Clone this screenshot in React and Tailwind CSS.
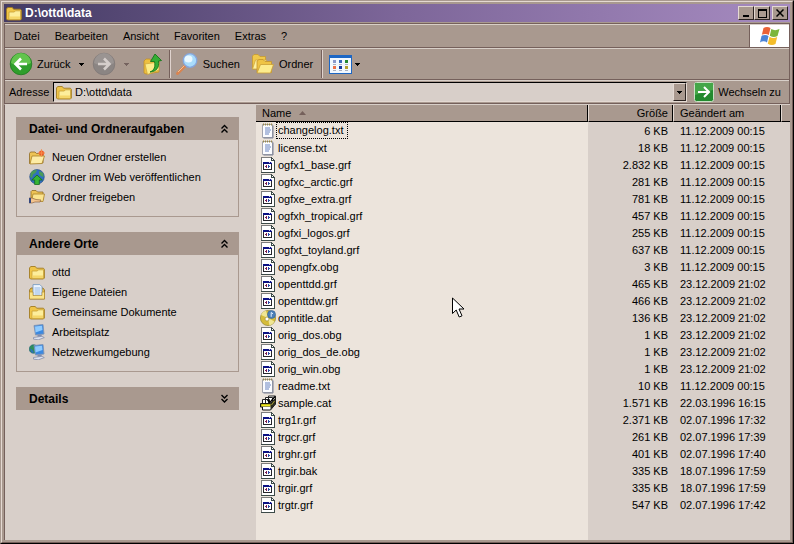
import React from "react";

const Folder = () => (
  <svg width="16" height="16" viewBox="0 0 16 16" className="shrink-0" aria-hidden="true">
    <path d="M.5 4 1.700 2.500h4.600L7.600 4.200h6.800l1 1.200v8.600l-1 1H1.500L.5 14z" fill="#f0c548" stroke="#a17c22" strokeWidth=".9" />
    <path d="M3 7h5.300l1.200-1.200h5v8.400H3z" fill="#fdee9c" stroke="#c79f38" strokeWidth=".8" />
    <path d="M3.500 11.500h10.600v2.300H3.500z" fill="#f5d769" />
  </svg>
);

const NewFolder = () => (
  <svg width="16" height="16" viewBox="0 0 16 16" className="shrink-0" aria-hidden="true">
    <path d="M.5 14.500V4.500l1-1.500h4.500l1.500 1.500H14V14z" fill="#edc355" stroke="#8f6b25" strokeWidth=".8" />
    <path d="M3 7h12.500L13 14.500l-12 .5z" fill="#fdeca6" stroke="#a98128" strokeWidth=".8" />
    <circle cx="12.500" cy="4" r="2.600" fill="#ef5a26" />
    <path d="M12.500.3v7.400M8.800 4h7.400" stroke="#f58a4a" />
  </svg>
);

const Globe = () => (
  <svg width="16" height="16" viewBox="0 0 16 16" className="shrink-0" aria-hidden="true">
    <circle cx="8" cy="7.800" r="7.300" fill="#2f6fc0" stroke="#1d4580" strokeWidth=".6" />
    <path d="M2 3.500C4 1 7 .6 8 1.300L6.500 4 4 5.500 3 9 1.200 8zM10 2l4 2 .7 4-2.700-1-2-2z" fill="#4a9c57" />
    <path d="m8 6 5.300 5h-3v4.600H5.700V11h-3z" fill="#35b535" stroke="#14681a" strokeWidth=".8" />
  </svg>
);

const Share = () => (
  <svg width="16" height="16" viewBox="0 0 16 16" className="shrink-0" aria-hidden="true">
    <path d="M2 11V2.500l1-1h4L8.500 3H14v8z" fill="#edc355" stroke="#8f6b25" strokeWidth=".8" />
    <path d="M4 5h11.500L14 12.500H2.500z" fill="#fbe48e" stroke="#a98128" strokeWidth=".8" />
    <path d="M0 9h3l4 1.500 5 .5-1 2H6l-3 1H0z" fill="#f3c48e" stroke="#7d5230" strokeWidth=".6" />
    <path d="M0 9h2v5H0z" fill="#34477e" />
  </svg>
);

const DocsFolder = () => (
  <svg width="16" height="16" viewBox="0 0 16 16" className="shrink-0" aria-hidden="true">
    <path d="M.5 6 2 4h12l1.500 2v9H.5z" fill="#e5b941" stroke="#94701f" strokeWidth=".8" />
    <path d="M4 .6h6.800L13 2.800V12H4z" fill="#eef6ff" stroke="#6d93bd" strokeWidth=".8" />
    <path d="M5.500 4h6M5.500 6h6M5.500 8h6M5.500 10h6" stroke="#7aa7dc" strokeWidth=".8" />
    <path d="M.5 8H4v3.500h9V8h2.500v7H.5z" fill="#fbe48a" stroke="#ab8328" strokeWidth=".6" />
  </svg>
);

const Computer = ({ net }) => (
  <svg width="16" height="16" viewBox="0 0 16 16" className="shrink-0" aria-hidden="true">
    {net && <circle cx="4.500" cy="5" r="4.300" fill="#2d8f5b" stroke="#205f80" strokeWidth=".6" />}
    {net && <path d="M1 5c2-1 2 2 4 3L3 9z" fill="#2d6fc0" />}
    <path d="M5 1.500 14 .5l1 9.500-8.500 1z" fill="#3c89e0" stroke="#7f94b4" strokeWidth=".9" />
    <path d="m6 2.500 7-.8.500 4.300-7 2.500z" fill="#8fcbff" />
    <path d="M8.500 10.800H12.500l.5 2H8.500z" fill="#7f8cb0" />
    <path d="m4.500 13.500 8.500-1.200 2.300 1.300-6 2.200-4.800-.7z" fill="#dde2f0" stroke="#7d86a3" strokeWidth=".7" />
  </svg>
);

const TextFile = () => (
  <svg width="16" height="16" viewBox="0 0 16 16" className="shrink-0" aria-hidden="true">
    <path d="M2.500 1.500h10v13h-10z" fill="#fbfcff" stroke="#9a9ca8" strokeWidth=".9" />
    <path d="M13 2.500V15H3.500" fill="none" stroke="#7a8094" />
    <path d="M3.500.5v2M5.500.5v2M7.500.5v2M9.500.5v2M11.500.5v2" stroke="#9a8845" strokeWidth="1" />
    <path d="M5 5h5M5 7h6M5 9h5M5 11h4" stroke="#5777b8" strokeWidth=".9" />
  </svg>
);

const AppFile = () => (
  <svg width="16" height="16" viewBox="0 0 16 16" className="shrink-0" shapeRendering="crispEdges" aria-hidden="true">
    <path d="M1 0h10l4 4v12H1z" fill="#fff" />
    <path d="M1 0h10v1H2v14H1z" fill="#7d7d7d" />
    <path d="M1 15h13v1H1zM14 4h1v12h-1z" fill="#3c4a48" />
    <path d="M11 0h1v1h1v1h1v1h1v1h-4z" fill="#3c4a48" />
    <path d="M12 2h1v1h-1z" fill="#fff" />
    <path d="M3 5h9v8H3z" fill="#26262c" />
    <path d="M3 5h9v2H3z" fill="#0a1084" />
    <path d="M4 7h7v5H4z" fill="#fff" />
    <path d="M9 5h1v1H9zM11 5h1v1h-1z" fill="#c8c8e8" />
    <path d="M5 9h2v1H5zM6 8h1v3H6z" fill="#7c1c50" />
    <path d="M8 9h2v1H8zM8 8h1v3H8z" fill="#2b49a8" />
  </svg>
);

const Disc = () => (
  <svg width="16" height="16" viewBox="0 0 16 16" className="shrink-0" aria-hidden="true">
    <circle cx="8" cy="8" r="7.600" fill="#d6bc3a" stroke="#8f8434" strokeWidth=".7" />
    <path d="M8 8 1 5a7.500 7.500 0 0 1 5-4.500zM8 8l6.500 3.500a7.500 7.500 0 0 1-5 4z" fill="#f0e694" />
    <circle cx="7" cy="9" r="2" fill="#fff" stroke="#a39338" strokeWidth=".7" />
    <circle cx="11.500" cy="4.500" r="4" fill="#4b7fb8" stroke="#2f5f93" strokeWidth=".6" />
    <path d="M11.200 6.800V2.500l1.800 1.300" stroke="#e3f1ff" fill="none" />
  </svg>
);

const Catalog = () => (
  <svg width="16" height="16" viewBox="0 0 16 16" className="shrink-0" aria-hidden="true">
    <path d="M8.500 1h7v8h-7zM5.500 2.500h7v8h-7zM2.500 4.500h7v7h-7z" fill="#fff" stroke="#222" />
    <path d="M.5 8.500h10l5-5V9l-5 6h-8v-3h-2z" fill="#fff" stroke="#111" />
    <path d="M10.500 8.500l5-5.500v6l-5 6z" fill="#2b2b22" />
    <path d="M1 9h9.500v2.500H1z" fill="#f2ea1e" stroke="#3d3a08" strokeWidth=".5" />
    <path d="m7.500 5 2.500 2.500 5-6" fill="none" stroke="#000" strokeWidth="1.500" />
    <path d="m11.500 10 3-4" stroke="#a8a030" />
  </svg>
);

const RoundArrow = ({ grey }) => (
  <svg width="24" height="24" viewBox="0 0 24 24" className="shrink-0" aria-hidden="true">
    <circle cx="12" cy="12" r="10.800" fill={grey ? "#8b8583" : "#2f9e2c"} stroke={grey ? "#807977" : "#217a20"} strokeWidth=".8" />
    <path d="M2 11a10 10 0 0 1 20 0c-5 3-15 3-20 0z" fill={grey ? "#9a9492" : "#62c44d"} />
    <path
      d={grey ? "M6 12h11M12 6.500l5.500 5.500-5.500 5.500" : "M18 12H7M12 6.500 6.500 12l5.500 5.500"}
      fill="none"
      stroke={grey ? "#d5cecb" : "#fff"}
      strokeWidth="2.600"
    />
  </svg>
);

const UpFolder = () => (
  <svg width="22" height="24" viewBox="0 0 22 24" className="shrink-0" aria-hidden="true">
    <path d="M3 9l2-2h4l1 2h8v11l-13 2-2-1z" fill="#edc03f" stroke="#c09028" strokeWidth=".8" />
    <path d="m4 12 14-2v8L6.500 22.500z" fill="#fcec88" stroke="#cda33a" strokeWidth=".7" />
    <path d="M9 20c4.500-2 5.500-5 4.500-10.500L9.500 9.500 14 2l6.500 6.500-3 .5c1 6.500-2 10.500-8.500 11z" fill="#34ae35" stroke="#157619" strokeWidth=".9" />
  </svg>
);

const Magnifier = () => (
  <svg width="24" height="24" viewBox="0 0 24 24" className="shrink-0" aria-hidden="true">
    <path d="M10 14 2.500 21.500" stroke="#d98450" strokeWidth="3" strokeLinecap="round" />
    <path d="M9.500 13.500 3 20" stroke="#f7c08f" strokeWidth="1" />
    <circle cx="15" cy="8.500" r="6.800" fill="#a9dcfb" stroke="#86a6dc" strokeWidth="1.300" />
    <ellipse cx="13.500" cy="7" rx="4" ry="3.500" fill="#e9f8ff" />
  </svg>
);

const Folders = () => (
  <svg width="24" height="24" viewBox="0 0 24 24" className="shrink-0" aria-hidden="true">
    <path d="M1.500 17V4l1.500-1.500h4l2 2h5.500v12z" fill="#f0c94b" stroke="#c79a30" strokeWidth=".8" />
    <path d="m1.500 17 3-9h11l-3 9z" fill="#fdf0a0" stroke="#cfa63d" strokeWidth=".8" />
    <path d="M6 20.500V9l2-1.500h4l2 2h6.500v11z" fill="#efc444" stroke="#c4942c" strokeWidth=".8" />
    <path d="m6 21 3.500-8.500h13L19.500 21z" fill="#fdec8d" stroke="#cb9f36" strokeWidth=".8" />
  </svg>
);

const Views = () => (
  <svg width="24" height="20" viewBox="0 0 24 20" className="shrink-0" shapeRendering="crispEdges" aria-hidden="true">
    <path d="M0 1h23v19H0z" fill="#1c66c4" />
    <path d="M1 4h21v15H1z" fill="#f1f8ff" />
    <path d="M4 6h3v3H4z" fill="#8999cc" />
    <path d="M10 6h3v3h-3z" fill="#3768bb" />
    <path d="M16 6h3v3h-3z" fill="#228931" />
    <path d="M4 12h3v3H4z" fill="#ec7148" />
    <path d="M10 12h3v3h-3z" fill="#173b9e" />
    <path d="M16 12h3v3h-3z" fill="#b5a02d" />
    <path d="M4 10h3v1H4zM10 10h3v1h-3zM16 10h3v1h-3zM4 16h3v1H4zM10 16h3v1h-3zM16 16h3v1h-3z" fill="#a9b0bf" />
  </svg>
);

const Flag = () => (
  <svg width="22" height="20" viewBox="0 0 22 20" aria-hidden="true">
    <path d="M4.500 2c2-1.500 5-1.500 7 0L9.800 9c-2-1.500-5-1.500-7 0z" fill="#ea6236" />
    <path d="M12.300 3c2.500 1.500 5 1.500 8.200 0l-2 7c-2.500 1.500-5 1.500-7.700-.2z" fill="#7bb63c" />
    <path d="M2.500 10c2-1.500 5-1.500 7 0L8 16.500c-2-1.700-5-1.500-7 0z" fill="#4a83d6" />
    <path d="M10.500 10.800c2.500 1.700 5 1.500 7.700.2L16.500 18c-2.500 1.500-5 1.500-7.700-.2z" fill="#f4bd2b" />
  </svg>
);

const Caret = ({ faint }) => (
  <svg width="5" height="3" viewBox="0 0 5 3" className="shrink-0" shapeRendering="crispEdges" aria-hidden="true">
    <path d="M0 0h5v1H4v1H3v1H2V2H1V1H0z" fill={faint ? "#75635f" : "#000"} />
  </svg>
);

const Chevrons = ({ down }) => (
  <svg width="9" height="10" viewBox="0 0 9 10" aria-hidden="true">
    <path
      d={down ? "M1.500 1l3 3 3-3M1.500 5l3 3 3-3" : "M1.500 4.500l3-3 3 3M1.500 8.500l3-3 3 3"}
      fill="none"
      stroke="#000"
      strokeWidth="1.400"
    />
  </svg>
);

const Divider = () => <span className="h-7 w-[2px] shrink-0 border-l border-r border-l-[#75605b] border-r-[#e0d3ce]" />;

const bar = "flex items-center border-t border-b border-t-[#d8cfc8] border-b-[#75605b]";
const raised = "border border-t-[#e4d9d2] border-l-[#e4d9d2] border-r-[#2a2220] border-b-[#2a2220] bg-[#a9998f]";

function Panel({ title, items }) {
  return (
    <section>
      <h2 className="flex h-[23px] items-center justify-between bg-[#a9998f] pr-[10px] pl-[13px] text-[12px] font-bold">
        {title}
        <button type="button" aria-label={title + " umschalten"}>
          <Chevrons down={!items} />
        </button>
      </h2>
      {items && (
        <ul className="border border-t-0 border-[#a9998f] pt-[7px] pb-[9px] pl-3">
          {items.map(([icon, label]) => (
            <li key={label} className="h-5">
              <a href="#" className="flex h-5 items-center gap-[7px]">
                {icon}
                {label}
              </a>
            </li>
          ))}
        </ul>
      )}
    </section>
  );
}

const files = [
  ["changelog.txt", "6 KB", "11.12.2009 00:15"],
  ["license.txt", "18 KB", "11.12.2009 00:15"],
  ["ogfx1_base.grf", "2.832 KB", "11.12.2009 00:15"],
  ["ogfxc_arctic.grf", "281 KB", "11.12.2009 00:15"],
  ["ogfxe_extra.grf", "781 KB", "11.12.2009 00:15"],
  ["ogfxh_tropical.grf", "457 KB", "11.12.2009 00:15"],
  ["ogfxi_logos.grf", "255 KB", "11.12.2009 00:15"],
  ["ogfxt_toyland.grf", "637 KB", "11.12.2009 00:15"],
  ["opengfx.obg", "3 KB", "11.12.2009 00:15"],
  ["openttdd.grf", "465 KB", "23.12.2009 21:02"],
  ["openttdw.grf", "466 KB", "23.12.2009 21:02"],
  ["opntitle.dat", "136 KB", "23.12.2009 21:02"],
  ["orig_dos.obg", "1 KB", "23.12.2009 21:02"],
  ["orig_dos_de.obg", "1 KB", "23.12.2009 21:02"],
  ["orig_win.obg", "1 KB", "23.12.2009 21:02"],
  ["readme.txt", "10 KB", "11.12.2009 00:15"],
  ["sample.cat", "1.571 KB", "22.03.1996 16:15"],
  ["trg1r.grf", "2.371 KB", "02.07.1996 17:32"],
  ["trgcr.grf", "261 KB", "02.07.1996 17:39"],
  ["trghr.grf", "401 KB", "02.07.1996 17:40"],
  ["trgir.bak", "335 KB", "18.07.1996 17:59"],
  ["trgir.grf", "335 KB", "18.07.1996 17:59"],
  ["trgtr.grf", "547 KB", "02.07.1996 17:42"],
];

function FileIcon({ name }) {
  if (name.endsWith(".txt")) return <TextFile />;
  if (name.endsWith(".dat")) return <Disc />;
  if (name.endsWith(".cat")) return <Catalog />;
  return <AppFile />;
}

const th = "border-b border-b-black p-0 font-normal";

export default function App() {
  return (
    <div className="flex min-h-screen flex-col border border-t-[#a9998f] border-r-black border-b-black border-l-[#a9998f] bg-[#a9998f] font-['Liberation_Sans',Arial,sans-serif] text-[11px] leading-4 text-black">
      <div className="flex grow flex-col border border-t-[#e4d9d2] border-r-[#75605b] border-b-[#75605b] border-l-[#e4d9d2] p-[2px]">
        <header className="flex h-[18px] items-center bg-linear-to-r from-[#443b64] via-[#7d6699] to-[#a68bc0] pr-[2px] pl-[2px]">
          <Folder />
          <h1 className="ml-[3px] grow text-[12px] font-bold text-white">D:\ottd\data</h1>
          <button type="button" aria-label="Minimieren" className={"flex h-[14px] w-4 items-end justify-center pb-[2px] " + raised}>
            <span className="h-[2px] w-[6px] bg-black" />
          </button>
          <button type="button" aria-label="Maximieren" className={"flex h-[14px] w-4 items-center justify-center " + raised}>
            <span className="h-[9px] w-[9px] border border-t-2 border-black" />
          </button>
          <button type="button" aria-label="Schließen" className={"ml-[2px] flex h-[14px] w-4 items-center justify-center " + raised}>
            <svg width="8" height="8" viewBox="0 0 8 8" aria-hidden="true">
              <path d="m.5.5 7 7m0-7-7 7" stroke="#000" strokeWidth="1.500" />
            </svg>
          </button>
        </header>

        <div className="mt-px border-t border-r border-l border-t-[#75605b] border-r-[#75605b] border-l-[#75605b]">
          <nav className={"h-6 justify-between " + bar}>
            <div className="flex gap-[15px] pl-[9px]">
              {["Datei", "Bearbeiten", "Ansicht", "Favoriten", "Extras", "?"].map((m) => (
                <button type="button" key={m}>
                  {m}
                </button>
              ))}
            </div>
            <div className="flex h-full w-10 items-center justify-center border-l border-[#75605b] bg-white">
              <Flag />
            </div>
          </nav>

          <div className={"h-8 pl-1 " + bar}>
            <button type="button" className="flex items-center gap-1">
              <RoundArrow />
              Zurück
            </button>
            <button type="button" aria-label="Verlauf zurück" className="px-2">
              <Caret />
            </button>
            <button type="button" aria-label="Vorwärts">
              <RoundArrow grey />
            </button>
            <button type="button" aria-label="Verlauf vorwärts" className="px-2">
              <Caret faint />
            </button>
            <button type="button" aria-label="Aufwärts" className="mr-[6px] ml-1">
              <UpFolder />
            </button>
            <Divider />
            <button type="button" className="ml-1 flex items-center gap-1">
              <Magnifier />
              Suchen
            </button>
            <button type="button" className="ml-[11px] flex items-center gap-1">
              <Folders />
              Ordner
            </button>
            <span className="w-2" />
            <Divider />
            <button type="button" aria-label="Ansichten" className="ml-[6px] flex items-center gap-[2px]">
              <Views />
              <Caret />
            </button>
          </div>

          <div className={"h-6 pl-1 " + bar}>
            <label htmlFor="address" className="w-11 shrink-0">
              Adresse
            </label>
            <div className="flex h-5 grow items-center border border-t-black border-r-[#e4d9d2] border-b-[#e4d9d2] border-l-black bg-[#d8cfc9] pl-[2px]">
              <Folder />
              <input id="address" defaultValue="D:\ottd\data" className="ml-[3px] min-w-0 grow bg-transparent outline-none" />
              <button type="button" aria-label="Adressliste" className={"flex h-full w-[13px] items-center justify-center " + raised}>
                <Caret />
              </button>
            </div>
            <button type="button" className="ml-[7px] flex shrink-0 items-center gap-1 pr-2">
              <svg width="20" height="20" viewBox="0 0 20 20" aria-hidden="true">
                <rect x=".5" y=".5" width="19" height="19" rx="2" fill="#228a2e" stroke="#c9e3c4" />
                <path d="M1 1h18v7L1 13z" fill="#44a648" />
                <path d="M4 10h11M10 5l5 5-5 5" fill="none" stroke="#fff" strokeWidth="2" />
              </svg>
              Wechseln zu
            </button>
          </div>
        </div>

        <div className="flex grow border-t border-l border-t-[#d8cfc8] border-l-[#75605b] bg-[#d8cfc9]">
          <aside className="flex w-[251px] shrink-0 flex-col gap-[15px] pt-3 pr-[17px] pl-[11px]">
            <Panel
              title="Datei- und Ordneraufgaben"
              items={[
                [<NewFolder />, "Neuen Ordner erstellen"],
                [<Globe />, "Ordner im Web veröffentlichen"],
                [<Share />, "Ordner freigeben"],
              ]}
            />
            <Panel
              title="Andere Orte"
              items={[
                [<Folder />, "ottd"],
                [<DocsFolder />, "Eigene Dateien"],
                [<Folder />, "Gemeinsame Dokumente"],
                [<Computer />, "Arbeitsplatz"],
                [<Computer net />, "Netzwerkumgebung"],
              ]}
            />
            <Panel title="Details" />
          </aside>

          <main className="relative flex min-w-0 grow flex-col">
            <table className="w-full table-fixed border-separate border-spacing-0">
              <colgroup>
                <col />
                <col className="w-[85px]" />
                <col className="w-[108px]" />
                <col className="w-[9px]" />
              </colgroup>
              <thead className="bg-[#a9998f]">
                <tr className="h-[17px]">
                  <th className={"border-r border-r-black " + th}>
                    <span className="flex items-center gap-2 pl-[6px]">
                      Name
                      <svg width="7" height="4" viewBox="0 0 7 4" aria-hidden="true">
                        <path d="M0 4 3.500 0 7 4z" fill="#75605b" />
                      </svg>
                    </span>
                  </th>
                  <th className={"border-r border-l border-r-black border-l-[#e4d9d2] " + th}>
                    <span className="block pr-1 text-right">Größe</span>
                  </th>
                  <th className={"border-r border-l border-r-black border-l-[#e4d9d2] " + th}>
                    <span className="block pl-[6px] text-left">Geändert am</span>
                  </th>
                  <th className={"border-l border-l-[#e4d9d2] " + th} aria-label="Weitere Spalten" />
                </tr>
              </thead>
              <tbody>
                {files.map(([name, size, date], i) => (
                  <tr key={name} className="h-[17px]">
                    <td className="bg-[#ece4dc] p-0">
                      <span className="flex h-[17px] items-center pl-1">
                        <FileIcon name={name} />
                        <span className={i === 0 ? "border border-dotted border-black pr-1 pl-px leading-[15px]" : "pl-[2px]"}>{name}</span>
                      </span>
                    </td>
                    <td className="p-0">
                      <span className="block pr-[5px] text-right">{size}</span>
                    </td>
                    <td className="p-0">
                      <span className="block pl-[7px]">{date}</span>
                    </td>
                    <td className="p-0" />
                  </tr>
                ))}
              </tbody>
            </table>
            <div className="mr-[202px] grow bg-[#ece4dc]" />
            <svg width="13" height="21" viewBox="0 0 13 21" className="absolute top-[192px] left-[196px]" aria-hidden="true">
              <path d="M.5 1v15.500l3.700-3.500 3 7 2.800-1.200-3-6.800h5z" fill="#fff" stroke="#000" />
            </svg>
          </main>
        </div>
      </div>
    </div>
  );
}
